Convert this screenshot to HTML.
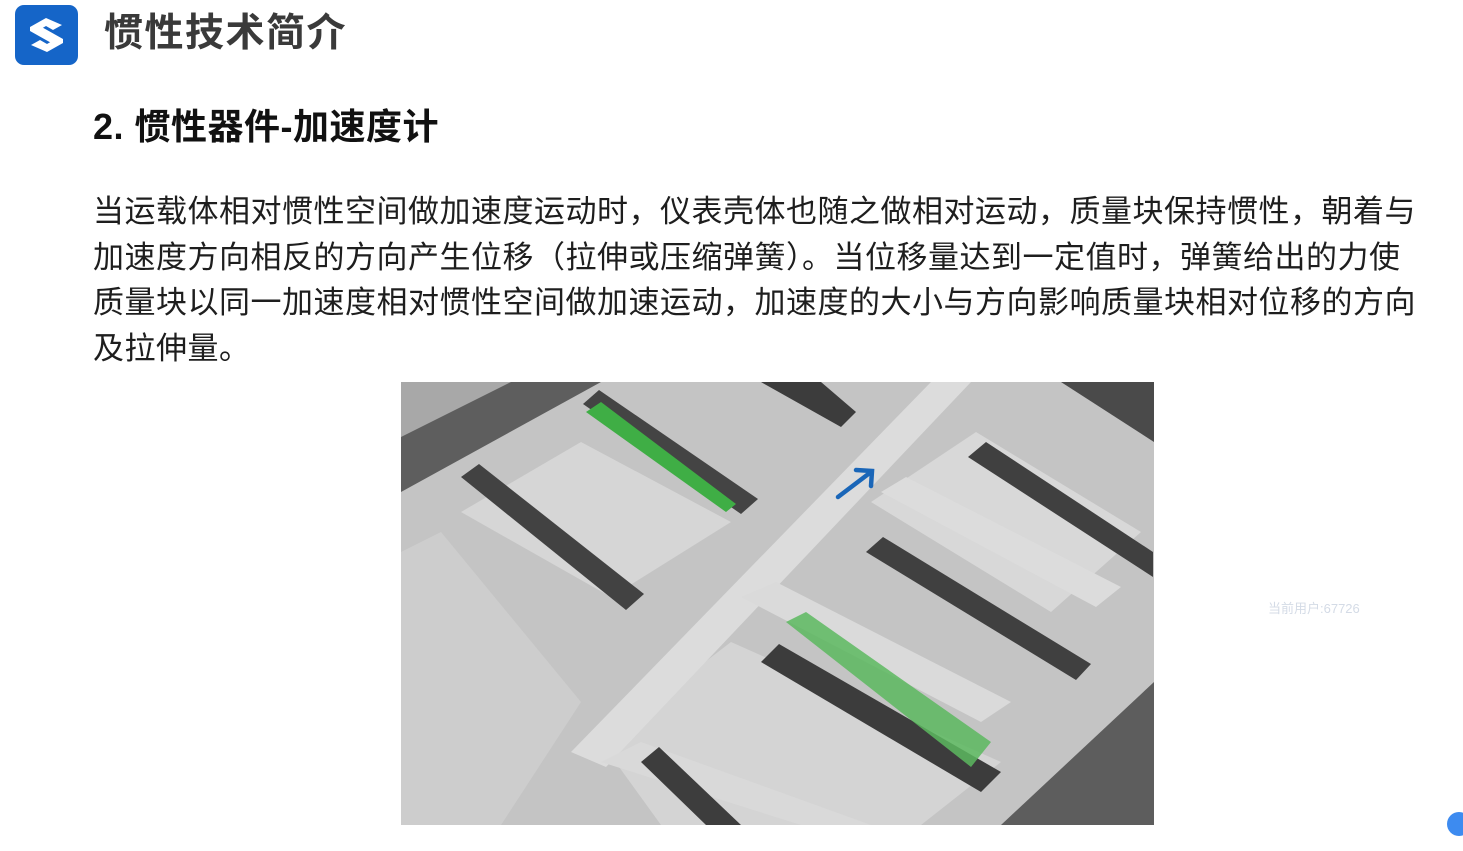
<!DOCTYPE html>
<html><head><meta charset="utf-8">
<style>
html,body{margin:0;padding:0;background:#fff;width:1463px;height:851px;overflow:hidden;position:relative;font-family:"Liberation Sans","Noto Sans CJK SC",sans-serif;}
.logo{position:absolute;left:15px;top:5px;width:63px;height:60px;background:#1565c8;border-radius:9px;}
.title{position:absolute;left:104px;top:9px;font-size:39px;font-weight:bold;color:#3a3a3a;line-height:50px;letter-spacing:1.5px;}
.h2{position:absolute;left:93px;top:103px;font-size:36px;font-weight:bold;color:#111;line-height:48px;letter-spacing:0.5px;}
.p{position:absolute;left:93px;top:189px;font-size:31px;color:#1e1e1e;line-height:45.5px;white-space:nowrap;letter-spacing:0.5px;}
.img{position:absolute;left:401px;top:382px;width:753px;height:443px;}
.wm{position:absolute;left:1268px;top:598px;font-size:13px;color:#d4dbe6;}
.dot{position:absolute;left:1447px;top:812px;width:24px;height:24px;border-radius:50%;background:#3d8bf0;}
</style></head><body>
<div class="logo">
<svg width="63" height="60" viewBox="0 0 63 60">
<g fill="#fff">
<polygon points="15,22 31,13 47,20 38,25 31,21 24,25 40,34 40,40 31,35 15,26"/>
<polygon points="48,38 32,47 16,40 25,35 32,39 39,35 23,26 23,20 32,25 48,34"/>
</g></svg>
</div>
<div class="title">惯性技术简介</div>
<div class="h2">2. 惯性器件-加速度计</div>
<div class="p">当运载体相对惯性空间做加速度运动时，仪表壳体也随之做相对运动，质量块保持惯性，朝着与<br>加速度方向相反的方向产生位移（拉伸或压缩弹簧）。当位移量达到一定值时，弹簧给出的力使<br>质量块以同一加速度相对惯性空间做加速运动，加速度的大小与方向影响质量块相对位移的方向<br>及拉伸量。</div>
<svg class="img" viewBox="0 0 753 443">
<rect width="753" height="443" fill="#c4c4c4"/>
<polygon points="0,0 200,0 0,110" fill="#5e5e5e"/>
<polygon points="0,0 110,0 0,55" fill="#a8a8a8"/>
<polygon points="660,0 753,0 753,60" fill="#4a4a4a"/>
<polygon points="600,443 753,300 753,443" fill="#5d5d5d"/>
<!-- recesses lighter -->
<polygon points="60,130 180,60 330,140 210,215" fill="#d6d6d6"/>
<polygon points="470,120 575,50 740,150 650,230" fill="#d8d8d8"/>
<polygon points="200,360 330,260 600,380 520,443 260,443" fill="#d4d4d4"/>
<polygon points="0,170 40,150 180,320 100,443 0,443" fill="#cdcdcd"/>
<!-- main diagonal beam -->
<polygon points="170,370 530,0 570,0 205,385" fill="#dcdcdc"/>
<polygon points="200,380 240,360 470,443 400,443" fill="#d9d9d9"/>
<polygon points="340,215 375,200 610,320 580,340" fill="#dadada"/>
<polygon points="480,110 505,95 720,205 695,225" fill="#dcdcdc"/>
<!-- dark bars -->
<polygon points="60,95 78,82 243,212 225,228" fill="#424242"/>
<polygon points="182,22 198,8 357,117 340,132" fill="#444"/>
<polygon points="185,30 200,20 335,122 325,130" fill="#3fae45"/>
<polygon points="465,170 482,155 690,282 675,298" fill="#404040"/>
<polygon points="567,75 585,60 752,170 752,195" fill="#404040"/>
<polygon points="360,280 378,262 600,390 580,410" fill="#3c3c3c"/>
<polygon points="385,240 405,230 590,360 570,385" fill="#5cb85f" opacity="0.85"/>
<polygon points="240,380 258,365 340,443 305,443" fill="#3d3d3d"/>
<polygon points="360,0 420,0 455,30 440,45" fill="#3c3c3c"/>
<!-- arrow -->
<g stroke="#1a66b8" stroke-width="4.5" fill="none" stroke-linecap="round">
<line x1="437" y1="115" x2="470" y2="90"/>
<polyline points="455,88 471,89 470,104"/>
</g>
</svg>
<div class="wm">当前用户:67726</div>
<div class="dot"></div>
</body></html>
